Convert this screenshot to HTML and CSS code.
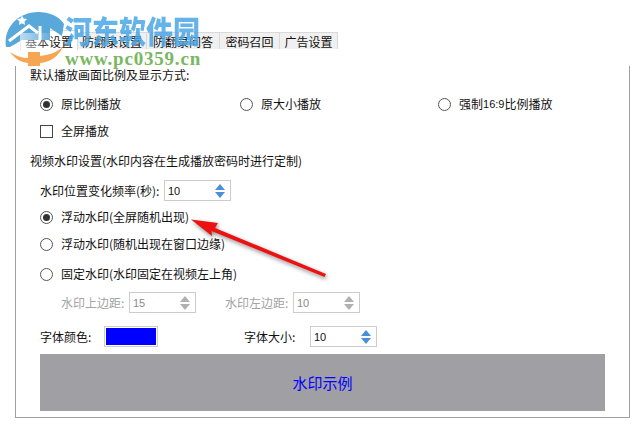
FILE: index.html
```html
<!DOCTYPE html>
<html lang="zh">
<head>
<meta charset="utf-8">
<title>基本设置</title>
<link rel="stylesheet" href="styles.css">
</head>
<body>
<div class="page">
  <div class="tabs">
    <div class="tab active">基本设置</div>
    <div class="tab w69">防翻录设置</div>
    <div class="tab w73">防翻录问答</div>
    <div class="tab w60">密码召回</div>
    <div class="tab w58">广告设置</div>
  </div>
  <div class="panel">
    <div class="heading first">默认播放画面比例及显示方式:</div>
    <div class="row options">
      <label class="opt"><span class="radio on"></span>原比例播放</label>
      <label class="opt"><span class="radio"></span>原大小播放</label>
      <label class="opt"><span class="radio"></span>强制<span class="small">16:9</span>比例播放</label>
    </div>
    <div class="row check-row">
      <label class="opt"><span class="check"></span>全屏播放</label>
    </div>
    <div class="heading second">视频水印设置(水印内容在生成播放密码时进行定制)</div>
    <div class="row freq">
      <span class="field-label">水印位置变化频率(秒):</span>
      <div class="spin"><span class="val">10</span><span class="arrows"><i class="up"></i><i class="down"></i></span></div>
    </div>
    <div class="row r1"><label class="opt"><span class="radio on"></span>浮动水印(全屏随机出现)</label></div>
    <div class="row r2"><label class="opt"><span class="radio"></span>浮动水印(随机出现在窗口边缘)</label></div>
    <div class="row r3"><label class="opt"><span class="radio"></span>固定水印(水印固定在视频左上角)</label></div>
    <div class="row margins disabled">
      <span class="field-label">水印上边距:</span>
      <div class="spin"><span class="val">15</span><span class="arrows"><i class="up"></i><i class="down"></i></span></div>
      <span class="field-label second-label">水印左边距:</span>
      <div class="spin"><span class="val">10</span><span class="arrows"><i class="up"></i><i class="down"></i></span></div>
    </div>
    <div class="row font-row">
      <span class="field-label color-label">字体颜色:</span>
      <div class="swatch"></div>
      <span class="field-label size-label">字体大小:</span>
      <div class="spin"><span class="val">10</span><span class="arrows"><i class="up"></i><i class="down"></i></span></div>
    </div>
    <div class="preview">水印示例</div>
  </div>

  <div class="logo">
    <svg width="80" height="70" viewBox="0 0 80 70">
      <defs>
        <linearGradient id="fade" x1="0" x2="1" y1="0" y2="0">
          <stop offset="0" stop-color="#fff" stop-opacity=".6"/>
          <stop offset=".6" stop-color="#fff" stop-opacity="0"/>
        </linearGradient>
      </defs>
      <path class="logo-blue" d="M6 47C3 27 19 12 38 12c11 0 21 4 26 12l-2 12-12-8v12H22l-12 7z"/>
      <path class="logo-cut" d="M9 41 29 26l9 7"/>
      <path class="logo-cut" d="M40 26v14"/>
      <path class="logo-star" d="M22 15.500l1.500 3 3.500.5-2.500 2.500.5 3.500-3-1.800-3 1.800.5-3.500-2.500-2.500 3.500-.5z"/>
      <path class="logo-orange" d="M10 52c6 4 12 6 18 6V52h12v4c8-1 16-3 23-9-5 10-13 15-23 16v3H28v-3c-8-1-14-5-18-11z"/>
      <rect x="20" y="33" width="58" height="16" fill="url(#fade)"/>
    </svg>
    <div class="logo-text">
      <div class="logo-cn">河东软件园</div>
      <div class="logo-url">www.pc0359.cn</div>
    </div>
  </div>

  <svg class="arrow" width="160" height="70" viewBox="185 215 160 70">
    <path d="M191 219.500 218 223l-3 5 111 46-1.500 3-113-46 .5 5z"/>
  </svg>
</div>
</body>
</html>
```

FILE: styles.css
```css
* { box-sizing: border-box; }
html, body { margin: 0; padding: 0; background: #fff; }
body { font-family: "Noto Sans CJK SC", "Liberation Sans", sans-serif; font-size: 12px; color: #111; }
.page { position: relative; width: 640px; height: 448px; overflow: hidden; padding-top: 32px; }

.tabs { display: flex; height: 17px; padding-left: 20px; align-items: stretch; }
.tab { width: 58px; background: #f0f0f0; border: 1px solid #d9d9d9; border-bottom: 0; border-left: 0; text-align: center; line-height: 17px; white-space: nowrap; }
.tab.active { background: #fff; margin-top: -2px; height: 20px; border-left: 1px solid #d9d9d9; position: relative; line-height: 21px; }
.w69 { width: 69px; }
.w73 { width: 73px; }
.w60 { width: 60px; }
.w58 { width: 58px; }

.panel { margin-left: 15px; width: 615px; border: 1px solid #a0a0a0; border-top: 0; padding: 0 0 6px 14px; }
.heading { height: 18px; line-height: 18px; }
.heading.first { margin-top: 17px; }
.heading.second { margin-top: 12px; }

.row { display: flex; align-items: center; }
.opt { display: flex; align-items: center; height: 18px; line-height: 18px; white-space: nowrap; }
.radio { width: 13px; height: 13px; border: 1px solid #555; border-radius: 50%; margin-right: 8px; background: #fff; flex: none; display: flex; align-items: center; justify-content: center; }
.radio.on::after { content: ""; width: 7px; height: 7px; border-radius: 50%; background: #333; }
.check { width: 13px; height: 13px; border: 1px solid #444; margin-right: 8px; background: #fff; flex: none; }
.small { font-size: 11px; font-family: "Liberation Sans", sans-serif; }

.options { padding-left: 10px; margin-top: 11px; }
.options .opt:nth-child(1) { width: 200px; }
.options .opt:nth-child(2) { width: 198px; }
.check-row { padding-left: 10px; margin-top: 9px; }
.freq { padding-left: 10px; margin-top: 10px; height: 21px; }
.freq .field-label { width: 124px; }
.r1 { padding-left: 10px; margin-top: 7px; }
.r2 { padding-left: 10px; margin-top: 9px; }
.r3 { padding-left: 10px; margin-top: 12px; }

.field-label { white-space: nowrap; flex: none; }
.spin { width: 67px; height: 21px; border: 1px solid #ccc; background: #fff; display: flex; align-items: center; justify-content: space-between; padding: 0 5px 0 3px; flex: none; }
.val { font-size: 11px; font-family: "Liberation Sans", sans-serif; color: #111; }
.arrows { display: flex; flex-direction: column; gap: 2px; }
.arrows i { display: block; width: 0; height: 0; border-left: 5px solid transparent; border-right: 5px solid transparent; }
.arrows .up { border-bottom: 6px solid #4a8fdc; }
.arrows .down { border-top: 6px solid #4a8fdc; }

.disabled { color: #a3a3a3; }
.disabled .val { color: #8a8a8a; }
.disabled .up { border-bottom-color: #b0b0b0; }
.disabled .down { border-top-color: #b0b0b0; }
.margins { padding-left: 31px; margin-top: 9px; height: 21px; }
.margins .field-label { width: 68px; }
.margins .second-label { width: 68px; margin-left: 29px; }

.font-row { padding-left: 10px; margin-top: 13px; height: 21px; }
.color-label { width: 64px; }
.swatch { width: 54px; height: 21px; border: 1px solid #ccc; padding: 1px; background: #fff; flex: none; }
.swatch::after { content: ""; display: block; height: 100%; background: #0000ff; }
.size-label { margin-left: 86px; width: 66px; }

.preview { margin: 7px 0 0 10px; width: 565px; height: 57px; background: #a09fa3; color: #0000ff; font-size: 15px; display: flex; align-items: center; justify-content: center; }

.logo { position: absolute; left: 0; top: 0; width: 210px; height: 70px; }
.logo svg { position: absolute; left: 0; top: 0; }
.logo-blue { fill: #58a8da; }
.logo-cut { fill: none; stroke: #fff; stroke-width: 3; }
.logo-star { fill: #fff; }
.logo-orange { fill: #f6a653; }
.logo-text { position: absolute; left: 65px; top: 12px; width: 140px; }
.logo-cn { font-family: "Noto Sans CJK SC", serif; font-weight: 900; font-size: 27px; line-height: 36px; color: #4aa6e6; opacity: .85; white-space: nowrap; transform: scaleY(1.15); }
.logo-url { font-family: "Liberation Serif", serif; font-weight: 700; font-size: 19px; letter-spacing: .8px; line-height: 18px; color: #78b860; white-space: nowrap; margin-top: 2px; }

.arrow { position: absolute; left: 185px; top: 215px; overflow: visible; }
.arrow path { fill: #ec1212; filter: drop-shadow(1px 2px 2px rgba(0,0,0,.45)); }
```
